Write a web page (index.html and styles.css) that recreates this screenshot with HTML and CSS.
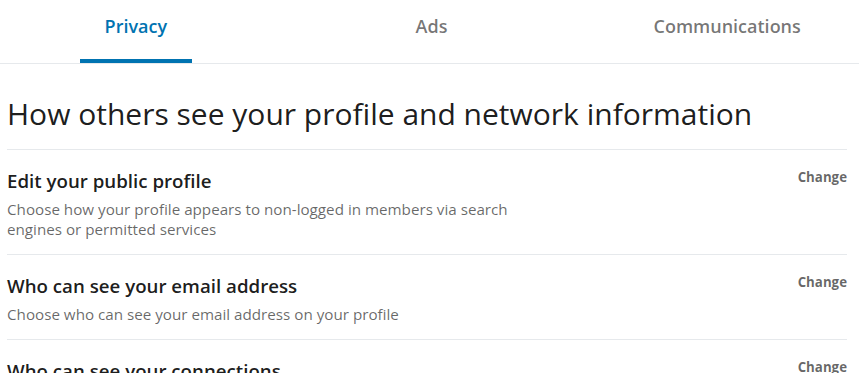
FILE: index.html
```html
<!DOCTYPE html>
<html lang="en">
  <head>
    <meta name="viewport" content="width=device-width, initial-scale=1.0" />
    <title>Settings &amp; Privacy</title>
    <link rel="stylesheet" href="styles.css">
  </head>
  <body>
    <nav class="tabs">
      <a class="tab active" href="#">Privacy</a>
      <a class="tab" href="#">Ads</a>
      <a class="tab" href="#">Communications</a>
    </nav>

    <main class="settings">
      <h1 class="section-title">How others see your profile and network information</h1>

      <div class="setting">
        <div class="setting-text">
          <h3>Edit your public profile</h3>
          <p>Choose how your profile appears to non-logged in members via search engines or permitted services</p>
        </div>
        <a class="change" href="#">Change</a>
      </div>

      <div class="setting">
        <div class="setting-text">
          <h3>Who can see your email address</h3>
          <p>Choose who can see your email address on your profile</p>
        </div>
        <a class="change" href="#">Change</a>
      </div>

      <div class="setting">
        <div class="setting-text">
          <h3>Who can see your connections</h3>
          <p>Choose who can see your list of connections</p>
        </div>
        <a class="change" href="#">Change</a>
      </div>
    </main>
  </body>
</html>
```

FILE: styles.css
```css
* {
  padding: 0;
  margin: 0;
  box-sizing: border-box;
}
body {
  font-family: "Open Sans", "Noto Sans", sans-serif;
  background-color: #ffffff;
  color: rgba(0, 0, 0, 0.9);
  overflow: hidden;
}
a {
  text-decoration: none;
}
.tabs {
  display: grid;
  grid-template-columns: 1fr 1fr 1fr;
  margin: 0 -16px 0 -12px;
  height: 64px;
  border-bottom: 1px solid #e6e9ec;
  justify-items: center;
}
.tab {
  display: flex;
  align-items: center;
  height: 63px;
  padding: 0 25px 8px;
  font-size: 18px;
  font-weight: 600;
  color: rgba(0, 0, 0, 0.55);
  border-bottom: 4px solid transparent;
}
.tab.active {
  color: #0073b1;
  border-bottom-color: #0073b1;
}
.settings {
  padding: 0 12px 0 7px;
}
.section-title {
  font-size: 30px;
  font-weight: 400;
  line-height: 40px;
  padding: 30px 0 15px;
  border-bottom: 1px solid #e6e9ec;
}
.setting {
  display: flex;
  justify-content: space-between;
  align-items: flex-start;
  padding: 19px 0 15px;
  border-bottom: 1px solid #e6e9ec;
}
.setting-text h3 {
  font-size: 18.7px;
  font-weight: 600;
  line-height: 24px;
  margin-bottom: 6px;
}
.setting-text p {
  font-size: 15.2px;
  line-height: 20px;
  color: rgba(0, 0, 0, 0.6);
  max-width: 520px;
}
.change {
  font-size: 13.3px;
  font-weight: 700;
  color: rgba(0, 0, 0, 0.6);
  line-height: 16px;
}
```
